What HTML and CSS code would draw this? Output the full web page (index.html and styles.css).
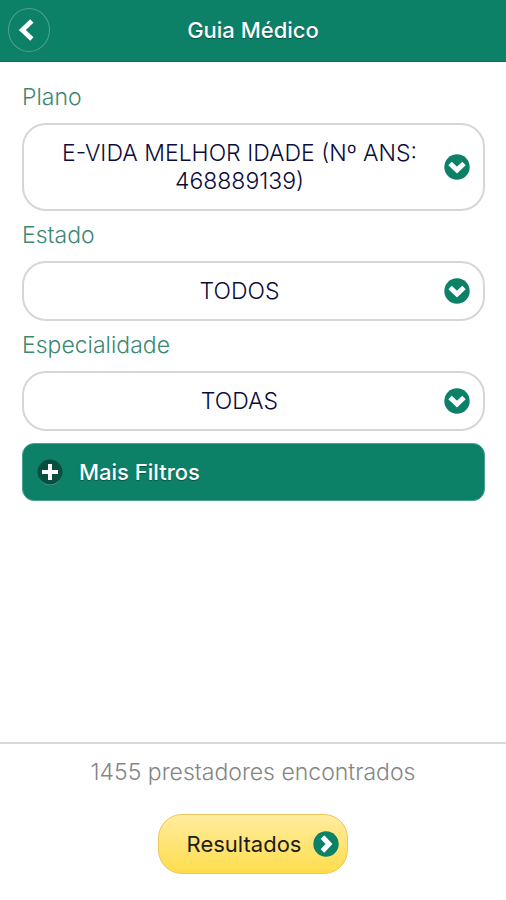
FILE: index.html
```html
<!DOCTYPE html>
<html lang="pt-BR">
<head>
<meta charset="utf-8">
<meta name="viewport" content="width=device-width, initial-scale=1">
<title>Guia Médico</title>
<link rel="stylesheet" href="styles.css">
</head>
<body>
<header class="topbar">
  <button class="back" type="button" aria-label="Voltar">
    <svg viewBox="0 0 42 42" aria-hidden="true"><path d="M24 11.500 14 21l10 9.500" fill="none" stroke="#fff" stroke-width="5"/></svg>
  </button>
  <h1 class="title">Guia Médico</h1>
</header>
<main class="filters">
  <label class="label" for="plano">Plano</label>
  <div class="field">
    <select class="select" id="plano"><option>E-VIDA MELHOR IDADE (Nº ANS: 468889139)</option></select>
    <svg class="icon arrow" viewBox="0 0 26 26" aria-hidden="true"><circle cx="13" cy="13" r="12.700" fill="#0d8068"/><path d="M6 9.500 13 16l7-6.500" fill="none" stroke="#fff" stroke-width="5"/></svg>
  </div>
  <label class="label" for="estado">Estado</label>
  <div class="field">
    <select class="select" id="estado"><option>TODOS</option></select>
    <svg class="icon arrow" viewBox="0 0 26 26" aria-hidden="true"><circle cx="13" cy="13" r="12.700" fill="#0d8068"/><path d="M6 9.500 13 16l7-6.500" fill="none" stroke="#fff" stroke-width="5"/></svg>
  </div>
  <label class="label" for="especialidade">Especialidade</label>
  <div class="field">
    <select class="select" id="especialidade"><option>TODAS</option></select>
    <svg class="icon arrow" viewBox="0 0 26 26" aria-hidden="true"><circle cx="13" cy="13" r="12.700" fill="#0d8068"/><path d="M6 9.500 13 16l7-6.500" fill="none" stroke="#fff" stroke-width="5"/></svg>
  </div>
  <button class="more" type="button">
    <svg class="icon" viewBox="0 0 26 26" aria-hidden="true"><circle cx="13" cy="14" r="12" fill="#5cab98"/><circle cx="13" cy="13" r="12.500" fill="#084f40"/><path d="M13 5v16M5 13h16" stroke="#fff" stroke-width="4"/></svg>
    Mais Filtros
  </button>
</main>
<footer class="summary">
  <p class="count">1455 prestadores encontrados</p>
  <button class="results" type="button">
    Resultados
    <svg class="icon" viewBox="0 0 26 26" aria-hidden="true"><circle cx="13" cy="13" r="12.700" fill="#0d8068"/><path d="m9.500 6 6.500 7-6.500 7" fill="none" stroke="#fff" stroke-width="5"/></svg>
  </button>
</footer>
</body>
</html>
```
FILE: styles.css
```css
* {
  box-sizing: border-box;
}

body {
  display: flex;
  flex-direction: column;
  min-height: 100vh;
  margin: 0;
  background: #fff;
  font-family: Inter, "Open Sans", sans-serif;
  font-size: 23px;
  font-weight: 300;
  line-height: 28px;
}

button,
select {
  font: inherit;
  cursor: pointer;
}

.topbar {
  display: grid;
  grid-template-columns: 42px 1fr 42px;
  align-items: center;
  height: 62px;
  padding: 0 8px 2px;
  background: #0d8068;
  border-bottom: 1px solid #08705a;
}

.back {
  width: 42px;
  height: 44px;
  padding: 0;
  background: none;
  border: 1px solid #4ca28f;
  border-radius: 50%;
}

.back svg {
  display: block;
  width: 100%;
}

.title {
  margin: 0;
  color: #fff;
  font-size: 22px;
  font-weight: 500;
  text-align: center;
  text-shadow: 0 1px 1px #075443;
}

.filters {
  flex: 1;
  padding: 11px 21px 12px 22px;
}

.label {
  display: block;
  padding: 10px 0 12px;
  color: #3d8872;
}

.field {
  position: relative;
}

.select {
  display: block;
  width: 100%;
  padding: 14px 56px 14px 28px;
  appearance: none;
  background: #fff;
  border: 2px solid #d6d6d6;
  border-radius: 24px;
  color: #0c0c3c;
  text-align: center;
  text-align-last: center;
  white-space: normal;
}

.icon {
  flex: none;
  width: 26px;
  height: 26px;
}

.arrow {
  position: absolute;
  top: 50%;
  right: 15px;
  margin-top: -13px;
  pointer-events: none;
}

.more {
  display: flex;
  align-items: center;
  gap: 16px;
  width: 100%;
  margin-top: 12px;
  padding: 14px;
  background: #0d8068;
  border: 1px solid #4ca28f;
  border-radius: 12px;
  color: #fff;
  font-size: 22px;
  font-weight: 500;
  text-shadow: 0 1px 1px #075443;
}

.summary {
  display: flex;
  flex-direction: column;
  align-items: center;
  gap: 28px;
  padding: 14px 20px 26px;
  border-top: 2px solid #d9d9d9;
}

.count {
  margin: 0;
  color: #858585;
}

.results {
  display: flex;
  align-items: center;
  gap: 12px;
  padding: 15px 8px 15px 28px;
  background: linear-gradient(#ffeca0, #ffdd4c);
  border: 1px solid #efc65e;
  border-radius: 24px;
  color: #1c1c1c;
  font-size: 22px;
  font-weight: 400;
}
```
